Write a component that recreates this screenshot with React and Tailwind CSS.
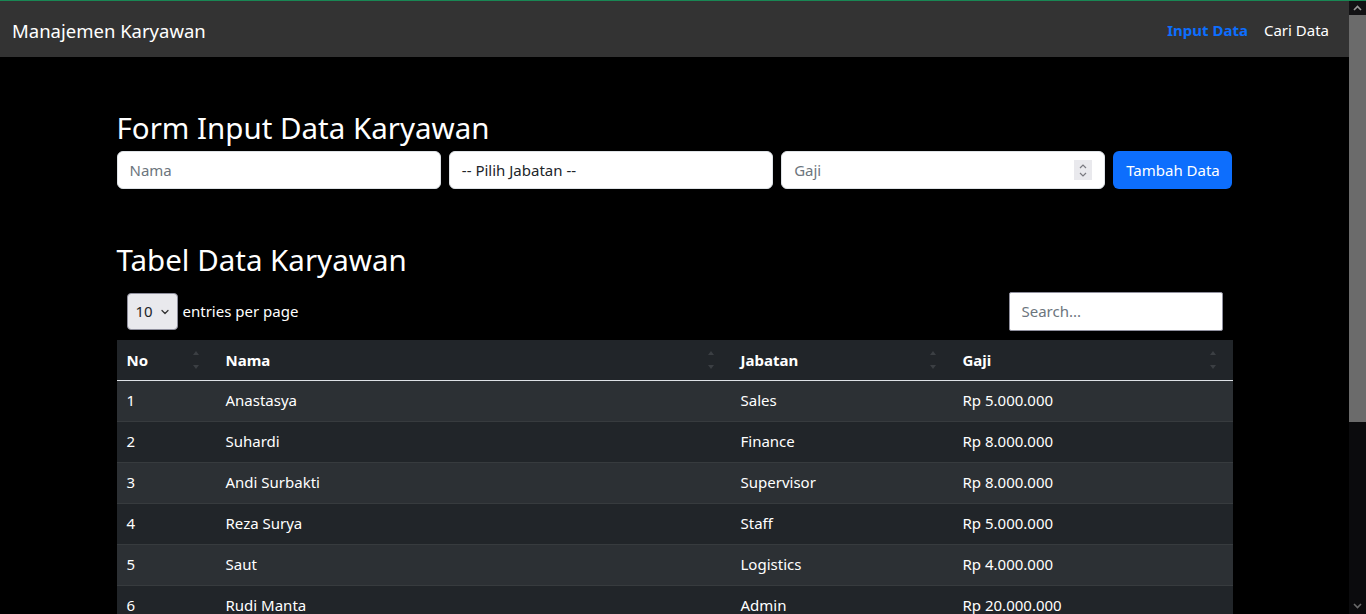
import { ChevronDown } from 'lucide-react';

const employees = [
  { no: 1, nama: 'Anastasya', jabatan: 'Sales', gaji: 'Rp 5.000.000' },
  { no: 2, nama: 'Suhardi', jabatan: 'Finance', gaji: 'Rp 8.000.000' },
  { no: 3, nama: 'Andi Surbakti', jabatan: 'Supervisor', gaji: 'Rp 8.000.000' },
  { no: 4, nama: 'Reza Surya', jabatan: 'Staff', gaji: 'Rp 5.000.000' },
  { no: 5, nama: 'Saut', jabatan: 'Logistics', gaji: 'Rp 4.000.000' },
  { no: 6, nama: 'Rudi Manta', jabatan: 'Admin', gaji: 'Rp 20.000.000' },
  { no: 7, nama: 'Dewi Lestari', jabatan: 'Staff', gaji: 'Rp 5.000.000' },
];

const SortIcon = () => (
  <svg width="8" height="22" viewBox="0 0 8 22" className="shrink-0">
    <path d="M4 2 L7 6 L1 6 Z" fill="#3b3f43" />
    <path d="M4 20 L7 16 L1 16 Z" fill="#3b3f43" />
  </svg>
);

const HeaderCell = ({ label }) => (
  <th className="px-[10px] h-[40px] text-left font-bold text-[15px] text-white">
    <div className="flex items-center justify-between pr-[6px]">
      <span>{label}</span>
      <SortIcon />
    </div>
  </th>
);

const Scrollbar = () => (
  <div className="w-[17px] flex flex-col bg-[#0b0b0d]">
    <div className="h-[14px] flex items-center justify-center bg-[#121214]">
      <svg width="9" height="6" viewBox="0 0 9 6">
        <path d="M1 5 L4.5 1.5 L8 5" stroke="#9a9a9a" strokeWidth="1.6" fill="none" />
      </svg>
    </div>
    <div className="h-[407px] bg-[#6b6b6b]" />
    <div className="flex-1" />
    <div className="h-[16px] flex items-center justify-center">
      <svg width="9" height="6" viewBox="0 0 9 6">
        <path d="M1 1 L4.5 4.5 L8 1" stroke="#6a6a6a" strokeWidth="1.6" fill="none" />
      </svg>
    </div>
  </div>
);

export default function App() {
  return (
    <div className="h-screen flex flex-col overflow-hidden bg-black font-['Noto_Sans',sans-serif]">
      <div className="h-px bg-[#198754]" />
      <div className="flex-1 flex min-h-0">
        <div className="flex-1 min-w-0 overflow-hidden">
          {/* Navbar */}
          <nav className="h-[56px] bg-[#333333] flex items-center justify-between pl-[12px] pr-[20px] pt-[3px]">
            <span className="text-white text-[18.5px]">Manajemen Karyawan</span>
            <div className="flex items-center gap-[16px] text-[15px]">
              <a className="text-[#0d6efd] font-bold">Input Data</a>
              <a className="text-white">Cari Data</a>
            </div>
          </nav>

          <div className="w-[1116px] mx-auto pt-[48px]">
            {/* Form */}
            <h2 className="text-white text-[29.5px] h-[38px] leading-[45px]">Form Input Data Karyawan</h2>
            <div className="mt-2 flex gap-2 h-[38px]">
              <input
                type="text"
                placeholder="Nama"
                className="flex-1 min-w-0 bg-white border border-[#dee2e6] rounded-[6px] px-3 pt-px text-[15px] text-[#212529] placeholder:text-[#6c757d] outline-none"
              />
              <div className="flex-1 min-w-0 bg-white border border-[#dee2e6] rounded-[6px] px-3 pt-px flex items-center text-[15px] text-[#212529]">
                -- Pilih Jabatan --
              </div>
              <div className="flex-1 min-w-0 bg-white border border-[#dee2e6] rounded-[6px] pl-3 pr-[12px] flex items-center justify-between text-[15px] text-[#6c757d]">
                <span className="pt-px">Gaji</span>
                <div className="w-[18px] h-[20px] bg-[#e9e9ed] flex flex-col items-center justify-center gap-[3px]">
                  <svg width="8" height="5" viewBox="0 0 8 5">
                    <path d="M1 4 L4 1 L7 4" stroke="#7a7a80" strokeWidth="1.2" fill="none" />
                  </svg>
                  <svg width="8" height="5" viewBox="0 0 8 5">
                    <path d="M1 1 L4 4 L7 1" stroke="#7a7a80" strokeWidth="1.2" fill="none" />
                  </svg>
                </div>
              </div>
              <button className="w-[119px] bg-[#0d6efd] text-white rounded-[6px] text-[15px] pt-px">Tambah Data</button>
            </div>

            {/* Table */}
            <h2 className="mt-[48px] text-white text-[29.5px] h-[38px] leading-[45px]">Tabel Data Karyawan</h2>
            <div className="mt-[17px] mb-[9px] px-[10px] flex items-center justify-between h-[39px]">
              <div className="flex items-center gap-[5px]">
                <div className="w-[51px] h-[37px] bg-[#e9e9ed] border border-[#8f8f9d] rounded-[4px] flex items-center justify-between pl-[8px] pr-[6px] text-[15px] text-[#212529]">
                  <span>10</span>
                  <ChevronDown size={12} strokeWidth={2.5} color="#333" />
                </div>
                <span className="text-white text-[15px]">entries per page</span>
              </div>
              <div className="w-[214px] h-[39px] bg-white border border-[#8f8f9d] rounded-[2px] px-[12px] flex items-center text-[15px] text-[#6c757d]">
                Search...
              </div>
            </div>

            <table className="w-full border-collapse">
              <colgroup>
                <col className="w-[99px]" />
                <col className="w-[515px]" />
                <col className="w-[222px]" />
                <col className="w-[280px]" />
              </colgroup>
              <thead className="bg-[#212529] border-b border-[#dee2e6]">
                <tr>
                  <HeaderCell label="No" />
                  <HeaderCell label="Nama" />
                  <HeaderCell label="Jabatan" />
                  <HeaderCell label="Gaji" />
                </tr>
              </thead>
              <tbody>
                {employees.map((emp, i) => (
                  <tr
                    key={emp.no}
                    className={`border-b border-[#373b3e] text-white text-[15px] ${i % 2 === 0 ? 'bg-[#2c3034]' : 'bg-[#212529]'}`}
                  >
                    <td className="px-[10px] h-[41px]">{emp.no}</td>
                    <td className="px-[10px] h-[41px]">{emp.nama}</td>
                    <td className="px-[10px] h-[41px]">{emp.jabatan}</td>
                    <td className="px-[10px] h-[41px]">{emp.gaji}</td>
                  </tr>
                ))}
              </tbody>
            </table>
          </div>
        </div>
        <Scrollbar />
      </div>
    </div>
  );
}
